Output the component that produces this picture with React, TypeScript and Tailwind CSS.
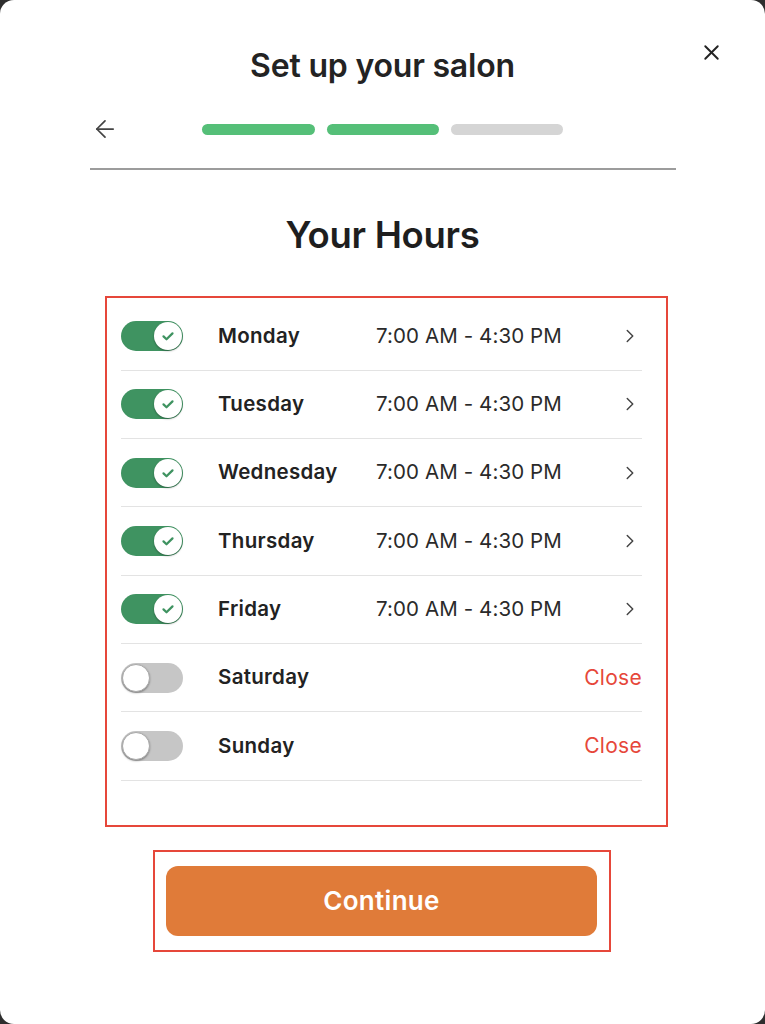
import { ArrowLeft, X, ChevronRight } from "lucide-react";

const days = [
  { name: "Monday", open: true },
  { name: "Tuesday", open: true },
  { name: "Wednesday", open: true },
  { name: "Thursday", open: true },
  { name: "Friday", open: true },
  { name: "Saturday", open: false },
  { name: "Sunday", open: false },
];

function Toggle({ on }: { on: boolean }) {
  return (
    <div
      className={`flex h-[30px] w-[62px] shrink-0 items-center rounded-full px-[1px] ${
        on ? "justify-end bg-[#3f9361]" : "justify-start bg-[#c6c6c6]"
      }`}
    >
      <div
        className={`flex h-[28px] w-[28px] items-center justify-center rounded-full bg-white shadow-[0_1px_2px_rgba(0,0,0,0.35)] ${
          on ? "" : "border border-[#a9a9a9]"
        }`}
      >
        {on && (
          <svg width="18" height="18" viewBox="0 0 24 24" fill="none">
            <path d="M6 12.5l4 3.8L18 8.5" stroke="#3f9361" strokeWidth="3" strokeLinecap="round" strokeLinejoin="round" />
          </svg>
        )}
      </div>
    </div>
  );
}

export default function App() {
  return (
    <div className="min-h-[1024px] w-full bg-[#2e2e2e]">
      <div className="relative h-[1024px] w-[765px] rounded-[14px] bg-white font-['Inter',sans-serif] text-[#232323]">
        {/* Close */}
        <button className="absolute right-[41px] top-[40px] text-[#222]">
          <X size={25} strokeWidth={1.8} />
        </button>

        {/* Header */}
        <h1 className="pt-[48px] text-center text-[32px] font-semibold leading-[36px] tracking-[-0.2px]">
          Set up your salon
        </h1>

        <div className="mx-auto mt-[31px] grid h-[26px] w-[586px] grid-cols-[1fr_auto_1fr] items-center">
          <ArrowLeft size={28} strokeWidth={1.5} className="ml-[1px] text-[#444]" />
          <div className="flex gap-[12px]">
            <div className="h-[11px] w-[113px] rounded-full bg-[#55bf78]" />
            <div className="h-[11px] w-[112px] rounded-full bg-[#55bf78]" />
            <div className="h-[11px] w-[112px] rounded-full bg-[#d5d5d5]" />
          </div>
          <div />
        </div>

        <div className="mx-auto mt-[27px] h-[1.5px] w-[586px] bg-[#9c9c9c]" />

        <h2 className="mt-[43px] text-center text-[36.5px] font-semibold leading-[44px] tracking-[-0.3px] text-[#1e1e1e]">
          Your Hours
        </h2>

        {/* Hours list */}
        <div className="ml-[105px] mt-[39px] w-[563px] border-2 border-[#e6473a] pb-[44px] pl-[14px] pr-[24px] pt-[5px]">
          {days.map((d) => (
            <div
              key={d.name}
              className="flex h-[68.3px] items-center border-b border-[#e3e3e3]"
            >
              <Toggle on={d.open} />
              <span className="ml-[35px] w-[158px] text-[20.5px] font-semibold tracking-[0.3px] text-[#222]">
                {d.name}
              </span>
              {d.open ? (
                <>
                  <span className="text-[20.5px] tracking-[0.1px] text-[#2a2a2a]">7:00 AM - 4:30 PM</span>
                  <ChevronRight size={22} strokeWidth={1.6} className="ml-auto mr-[1px] text-[#444]" />
                </>
              ) : (
                <span className="ml-auto text-[21px] tracking-[0.3px] text-[#e6473a]">Close</span>
              )}
            </div>
          ))}
        </div>

        {/* Continue */}
        <div className="ml-[153px] mt-[23px] w-[458px] border-2 border-[#e6473a] pb-[14px] pl-[11px] pr-[12px] pt-[14px]">
          <button className="flex h-[70px] w-full items-center justify-center rounded-[12px] bg-[#e07b39] text-[26px] font-semibold tracking-[0.3px] text-white">
            Continue
          </button>
        </div>
      </div>
    </div>
  );
}
